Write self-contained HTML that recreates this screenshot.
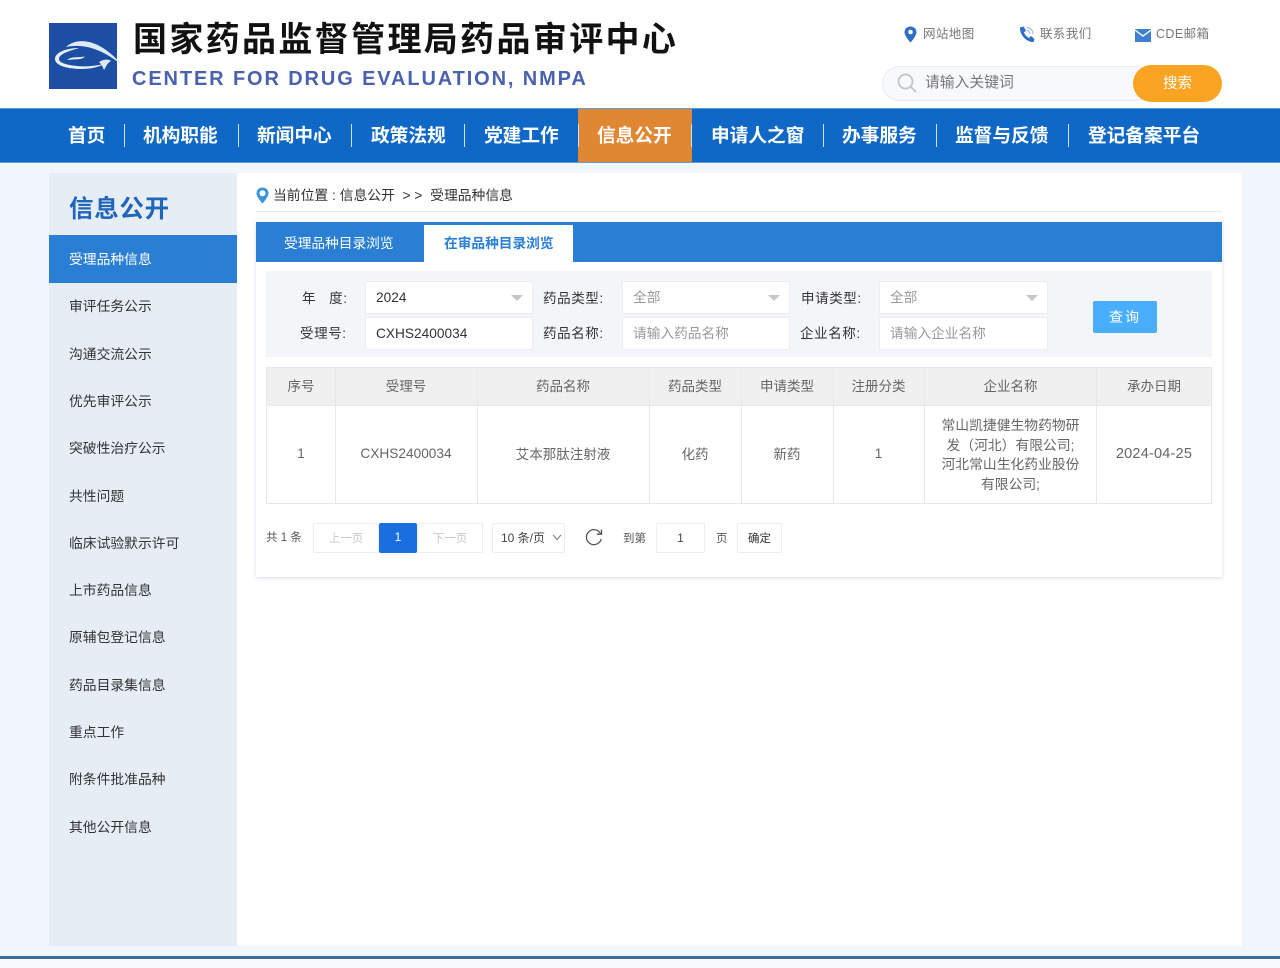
<!DOCTYPE html>
<html lang="zh">
<head>
<meta charset="utf-8">
<title>信息公开</title>
<style>
html,body{margin:0;padding:0;width:1280px;height:968px;overflow:hidden;background:#fff;font-family:"Liberation Sans","Noto Sans CJK SC",sans-serif;}
.a{position:absolute;white-space:nowrap;}
#root{position:relative;width:1280px;height:968px;overflow:hidden;}
.nav{top:122px;height:27px;line-height:27px;font-size:18.7px;font-weight:700;color:#fff;}
.sep{top:124px;width:1px;height:23px;background:#cfe0f2;}
.side{left:69px;font-size:13.8px;color:#333;height:20px;line-height:20px;}
.lab{font-size:13.5px;color:#333;height:20px;line-height:20px;letter-spacing:.6px;}
.box{background:#fff;border:1px solid #ebedf0;border-radius:2px;box-sizing:border-box;height:33px;line-height:31px;font-size:13.7px;padding-left:10px;}
.ph{color:#999;}
.arr{width:0;height:0;border-left:6px solid transparent;border-right:6px solid transparent;border-top:6px solid #c4c6cb;}
.c{text-align:center;font-size:13.5px;color:#666;}
.pg{box-sizing:border-box;border:1px solid #ebeef2;background:#fff;height:30px;line-height:30px;font-size:11.5px;text-align:center;border-radius:2px;}
</style>
</head>
<body>
<div id="root">

<!-- header -->
<svg class="a" style="left:49px;top:23px;overflow:visible" width="68" height="66" viewBox="0 0 68 66">
<rect width="68" height="66" fill="#1c4ea3"/>
<path d="M17 24C28 14 50 15 73 42C54 27 36 20 17 24Z" fill="#dfe9f6"/>
<path d="M30 25C16 25 6 30 6 36C6 43 20 46 32 46C42 46 50 44 55 41C46 43 36 44 28 43C18 42 10 40 10 36C10 31 20 28 30 25Z" fill="#e6eef8"/>
<path d="M18 37C23 33 28 35 36 33.500C33 37 27 36 24 36.500Z" fill="#e6eef8"/>
<path d="M50 39C54 36 60 36 62 38C58 40 57 44 55 47C54 44 52 41 50 39Z" fill="#dfe9f6"/>
</svg>
<div class="a" style="left:133px;top:18px;height:44px;line-height:44px;font-size:34px;font-weight:700;color:#111;letter-spacing:2.35px;">国家药品监督管理局药品审评中心</div>
<div class="a" style="left:132px;top:65px;height:28px;line-height:28px;font-size:20px;font-weight:700;color:#4a61ad;letter-spacing:1.88px;">CENTER FOR DRUG EVALUATION, NMPA</div>

<svg class="a" style="left:904px;top:26px" width="13" height="17" viewBox="0 0 13 17"><path d="M6.5 0.5C3 .5.5 3 .5 6.2.5 10 6.5 16.5 6.5 16.5S12.500 10 12.500 6.200C12.500 3 10 .5 6.500 .5Z" fill="#2e6fc4"/><circle cx="6.500" cy="6" r="2.300" fill="#fff"/></svg>
<div class="a" style="left:923px;top:24px;height:20px;line-height:20px;font-size:12.5px;color:#777;letter-spacing:.4px;">网站地图</div>
<svg class="a" style="left:1019px;top:26px" width="16" height="17" viewBox="0 0 16 17"><path d="M1 1.500L4.500 .5 7 4.500 5 6.500C6 9 7.500 10.500 10 12L12 10 15.500 13 14.500 16C8 16.500 .5 9 1 1.500Z" fill="#2e6fc4"/><path d="M8 1.500C11 1.500 14 4.500 14 8M8 4.500C9.800 4.500 11 6 11 8" fill="none" stroke="#9dbde6" stroke-width="1.200"/></svg>
<div class="a" style="left:1040px;top:24px;height:20px;line-height:20px;font-size:12.5px;color:#777;letter-spacing:.4px;">联系我们</div>
<svg class="a" style="left:1135px;top:29px" width="16" height="13" viewBox="0 0 16 13"><rect width="16" height="13" fill="#3f7fd0"/><path d="M0 1L8 7 16 1" fill="none" stroke="#fff" stroke-width="1.300"/></svg>
<div class="a" style="left:1156px;top:24px;height:20px;line-height:20px;font-size:12.5px;color:#777;letter-spacing:.4px;">CDE邮箱</div>

<div class="a" style="left:882px;top:66px;width:270px;height:35px;box-sizing:border-box;background:#f7f9fc;border:1px solid #e8ebf0;border-radius:18px;"></div>
<svg class="a" style="left:896px;top:72px" width="22" height="22" viewBox="0 0 22 22"><circle cx="9.500" cy="9.500" r="7" fill="none" stroke="#c4c4c4" stroke-width="1.800"/><path d="M15 15L20 20" stroke="#c4c4c4" stroke-width="1.800"/></svg>
<div class="a" style="left:925px;top:72px;height:22px;line-height:22px;font-size:14.800px;color:#777;">请输入关键词</div>
<div class="a" style="left:1133px;top:65px;width:89px;height:37px;background:#fba424;border-radius:19px;color:#fff;font-size:14.500px;text-align:center;line-height:39px;">搜索</div>

<!-- nav -->
<div class="a" style="left:0;top:108px;width:1280px;height:55px;background:#0f68c6;box-sizing:border-box;border-top:1px solid #5e9ad8;border-bottom:1px solid #5e9ad8;"></div>
<div class="a" style="left:578px;top:109px;width:114px;height:53px;background:#e08733;"></div>
<div class="a nav" style="left:68px;">首页</div><div class="a sep" style="left:124px;"></div>
<div class="a nav" style="left:143px;">机构职能</div><div class="a sep" style="left:238px;"></div>
<div class="a nav" style="left:257px;">新闻中心</div><div class="a sep" style="left:351px;"></div>
<div class="a nav" style="left:371px;">政策法规</div><div class="a sep" style="left:464px;"></div>
<div class="a nav" style="left:484px;">党建工作</div><div class="a sep" style="left:578px;"></div>
<div class="a nav" style="left:597px;">信息公开</div><div class="a sep" style="left:691px;"></div>
<div class="a nav" style="left:711px;">申请人之窗</div><div class="a sep" style="left:823px;"></div>
<div class="a nav" style="left:842px;">办事服务</div><div class="a sep" style="left:936px;"></div>
<div class="a nav" style="left:955px;">监督与反馈</div><div class="a sep" style="left:1068px;"></div>
<div class="a nav" style="left:1088px;">登记备案平台</div>

<!-- page background -->
<div class="a" style="left:0;top:163px;width:1280px;height:793px;background:#f1f6fd;"></div>
<div class="a" style="left:0;top:956px;width:1280px;height:3px;background:#3e6a9f;"></div>
<div class="a" style="left:0;top:959px;width:1280px;height:9px;background:#f6faff;"></div>

<!-- sidebar -->
<div class="a" style="left:49px;top:173px;width:188px;height:773px;background:#e6edf5;"></div>
<div class="a" style="left:237px;top:173px;width:1005px;height:773px;background:#fff;"></div>
<div class="a" style="left:69px;top:193px;height:34px;line-height:34px;font-size:24.500px;font-weight:700;color:#2166bb;letter-spacing:.7px;">信息公开</div>
<div class="a" style="left:49px;top:235px;width:188px;height:48px;background:#2a7fd4;"></div>
<div class="a side" style="top:250px;color:#fff;">受理品种信息</div>
<div class="a side" style="top:297px;">审评任务公示</div>
<div class="a side" style="top:345px;">沟通交流公示</div>
<div class="a side" style="top:392px;">优先审评公示</div>
<div class="a side" style="top:439px;">突破性治疗公示</div>
<div class="a side" style="top:487px;">共性问题</div>
<div class="a side" style="top:534px;">临床试验默示许可</div>
<div class="a side" style="top:581px;">上市药品信息</div>
<div class="a side" style="top:628px;">原辅包登记信息</div>
<div class="a side" style="top:676px;">药品目录集信息</div>
<div class="a side" style="top:723px;">重点工作</div>
<div class="a side" style="top:770px;">附条件批准品种</div>
<div class="a side" style="top:818px;">其他公开信息</div>

<!-- breadcrumb -->
<svg class="a" style="left:256px;top:187px" width="13" height="17" viewBox="0 0 13 17"><path d="M6.500 .5C3 .5 .5 3 .5 6.200 .5 10 6.500 16.500 6.500 16.500S12.500 10 12.500 6.200C12.500 3 10 .5 6.500 .5Z" fill="#3a94dd"/><circle cx="6.500" cy="6.200" r="3" fill="#fff"/></svg>
<div class="a" style="left:273px;top:186px;height:20px;line-height:20px;font-size:13.800px;color:#333;">当前位置 : 信息公开 &nbsp;&gt; &gt;&nbsp; 受理品种信息</div>
<div class="a" style="left:256px;top:211px;width:966px;height:1px;background:#e8ebef;"></div>

<!-- panel -->
<div class="a" style="left:256px;top:222px;width:966px;height:355px;background:#fff;box-shadow:0 1px 4px rgba(90,120,160,.25);"></div>
<div class="a" style="left:256px;top:222px;width:966px;height:40px;background:#2a7fd4;"></div>
<div class="a" style="left:284px;top:234px;height:20px;line-height:20px;font-size:13.700px;color:#fff;">受理品种目录浏览</div>
<div class="a" style="left:424px;top:225px;width:149px;height:37px;background:#fff;"></div>
<div class="a" style="left:444px;top:234px;height:20px;line-height:20px;font-size:13.700px;font-weight:700;color:#2a7fd4;">在审品种目录浏览</div>

<!-- filter -->
<div class="a" style="left:266px;top:271px;width:946px;height:86px;background:#f3f5f8;"></div>
<div class="a lab" style="left:302px;top:289px;letter-spacing:.6px;">年 &nbsp;&nbsp;度:</div>
<div class="a lab" style="left:300px;top:324px;">受理号:</div>
<div class="a box" style="left:365px;top:281px;width:168px;color:#333;">2024</div>
<div class="a arr" style="left:511px;top:295px;"></div>
<div class="a box" style="left:365px;top:317px;width:168px;color:#333;">CXHS2400034</div>
<div class="a lab" style="left:543px;top:289px;">药品类型:</div>
<div class="a lab" style="left:543px;top:324px;">药品名称:</div>
<div class="a box ph" style="left:622px;top:281px;width:168px;">全部</div>
<div class="a arr" style="left:768px;top:295px;"></div>
<div class="a box ph" style="left:622px;top:317px;width:168px;">请输入药品名称</div>
<div class="a lab" style="left:801px;top:289px;">申请类型:</div>
<div class="a lab" style="left:800px;top:324px;">企业名称:</div>
<div class="a box ph" style="left:879px;top:281px;width:169px;">全部</div>
<div class="a arr" style="left:1026px;top:295px;"></div>
<div class="a box ph" style="left:879px;top:317px;width:169px;">请输入企业名称</div>
<div class="a" style="left:1093px;top:301px;width:64px;height:32px;background:#4aaeff;border-radius:2px;color:#fff;font-size:14px;text-align:center;line-height:32px;letter-spacing:2px;">查询</div>

<!-- table -->
<div class="a" style="left:266px;top:367px;width:946px;height:137px;box-sizing:border-box;border:1px solid #e8e8e8;background:#fff;"></div>
<div class="a" style="left:267px;top:368px;width:944px;height:38px;background:#f0f0f0;"></div>
<div class="a" style="left:267px;top:405px;width:944px;height:1px;background:#e8e8e8;"></div>
<div class="a" style="left:335px;top:367px;width:1px;height:136px;background:#e8e8e8;"></div>
<div class="a" style="left:477px;top:367px;width:1px;height:136px;background:#e8e8e8;"></div>
<div class="a" style="left:649px;top:367px;width:1px;height:136px;background:#e8e8e8;"></div>
<div class="a" style="left:741px;top:367px;width:1px;height:136px;background:#e8e8e8;"></div>
<div class="a" style="left:833px;top:367px;width:1px;height:136px;background:#e8e8e8;"></div>
<div class="a" style="left:924px;top:367px;width:1px;height:136px;background:#e8e8e8;"></div>
<div class="a" style="left:1096px;top:367px;width:1px;height:136px;background:#e8e8e8;"></div>

<div class="a c" style="left:267px;top:377px;width:68px;line-height:20px;">序号</div>
<div class="a c" style="left:335px;top:377px;width:142px;line-height:20px;">受理号</div>
<div class="a c" style="left:477px;top:377px;width:172px;line-height:20px;">药品名称</div>
<div class="a c" style="left:649px;top:377px;width:92px;line-height:20px;">药品类型</div>
<div class="a c" style="left:741px;top:377px;width:92px;line-height:20px;">申请类型</div>
<div class="a c" style="left:833px;top:377px;width:91px;line-height:20px;">注册分类</div>
<div class="a c" style="left:925px;top:377px;width:171px;line-height:20px;">企业名称</div>
<div class="a c" style="left:1097px;top:377px;width:114px;line-height:20px;">承办日期</div>

<div class="a c" style="left:267px;top:444px;width:68px;line-height:20px;">1</div>
<div class="a c" style="left:335px;top:444px;width:142px;line-height:20px;font-size:13.700px;">CXHS2400034</div>
<div class="a c" style="left:477px;top:445px;width:172px;line-height:20px;">艾本那肽注射液</div>
<div class="a c" style="left:649px;top:445px;width:92px;line-height:20px;">化药</div>
<div class="a c" style="left:741px;top:445px;width:92px;line-height:20px;">新药</div>
<div class="a c" style="left:833px;top:444px;width:91px;line-height:20px;">1</div>
<div class="a c" style="left:925px;top:416px;width:171px;line-height:19.500px;font-size:13.800px;">常山凯捷健生物药物研<br>发（河北）有限公司;<br>河北常山生化药业股份<br>有限公司;</div>
<div class="a c" style="left:1097px;top:444px;width:114px;line-height:20px;font-size:14.500px;letter-spacing:.2px;">2024-04-25</div>

<!-- pagination -->
<div class="a" style="left:266px;top:528px;height:20px;line-height:20px;font-size:11.500px;color:#555;">共 1 条</div>
<div class="a pg" style="left:313px;top:523px;width:66px;color:#c9c9c9;">上一页</div>
<div class="a pg" style="left:417px;top:523px;width:66px;color:#c9c9c9;">下一页</div>
<div class="a pg" style="left:379px;top:523px;width:38px;background:#1a6ee0;border-color:#1a6ee0;color:#fff;font-size:12px;line-height:27px;">1</div>
<div class="a pg" style="left:492px;top:523px;width:73px;color:#444;text-align:left;padding-left:8px;font-size:12px;line-height:29px;">10 条/页</div>
<svg class="a" style="left:551px;top:533px" width="12" height="9" viewBox="0 0 12 9"><path d="M2 2L6 6.500 10 2" fill="none" stroke="#777" stroke-width="1"/></svg>
<svg class="a" style="left:584px;top:528px" width="20" height="20" viewBox="0 0 20 20"><path d="M16.500 5.500A7.500 7.500 0 1 0 17.200 11" fill="none" stroke="#555" stroke-width="1.300"/><path d="M17.500 1.500V6.200H12.800" fill="none" stroke="#555" stroke-width="1.300"/></svg>
<div class="a" style="left:623px;top:529px;height:20px;line-height:20px;font-size:11.500px;color:#555;">到第</div>
<div class="a pg" style="left:656px;top:523px;width:49px;color:#444;font-size:12px;line-height:28px;">1</div>
<div class="a" style="left:716px;top:529px;height:20px;line-height:20px;font-size:11.500px;color:#555;">页</div>
<div class="a pg" style="left:737px;top:523px;width:45px;color:#333;">确定</div>

</div>
</body>
</html>
